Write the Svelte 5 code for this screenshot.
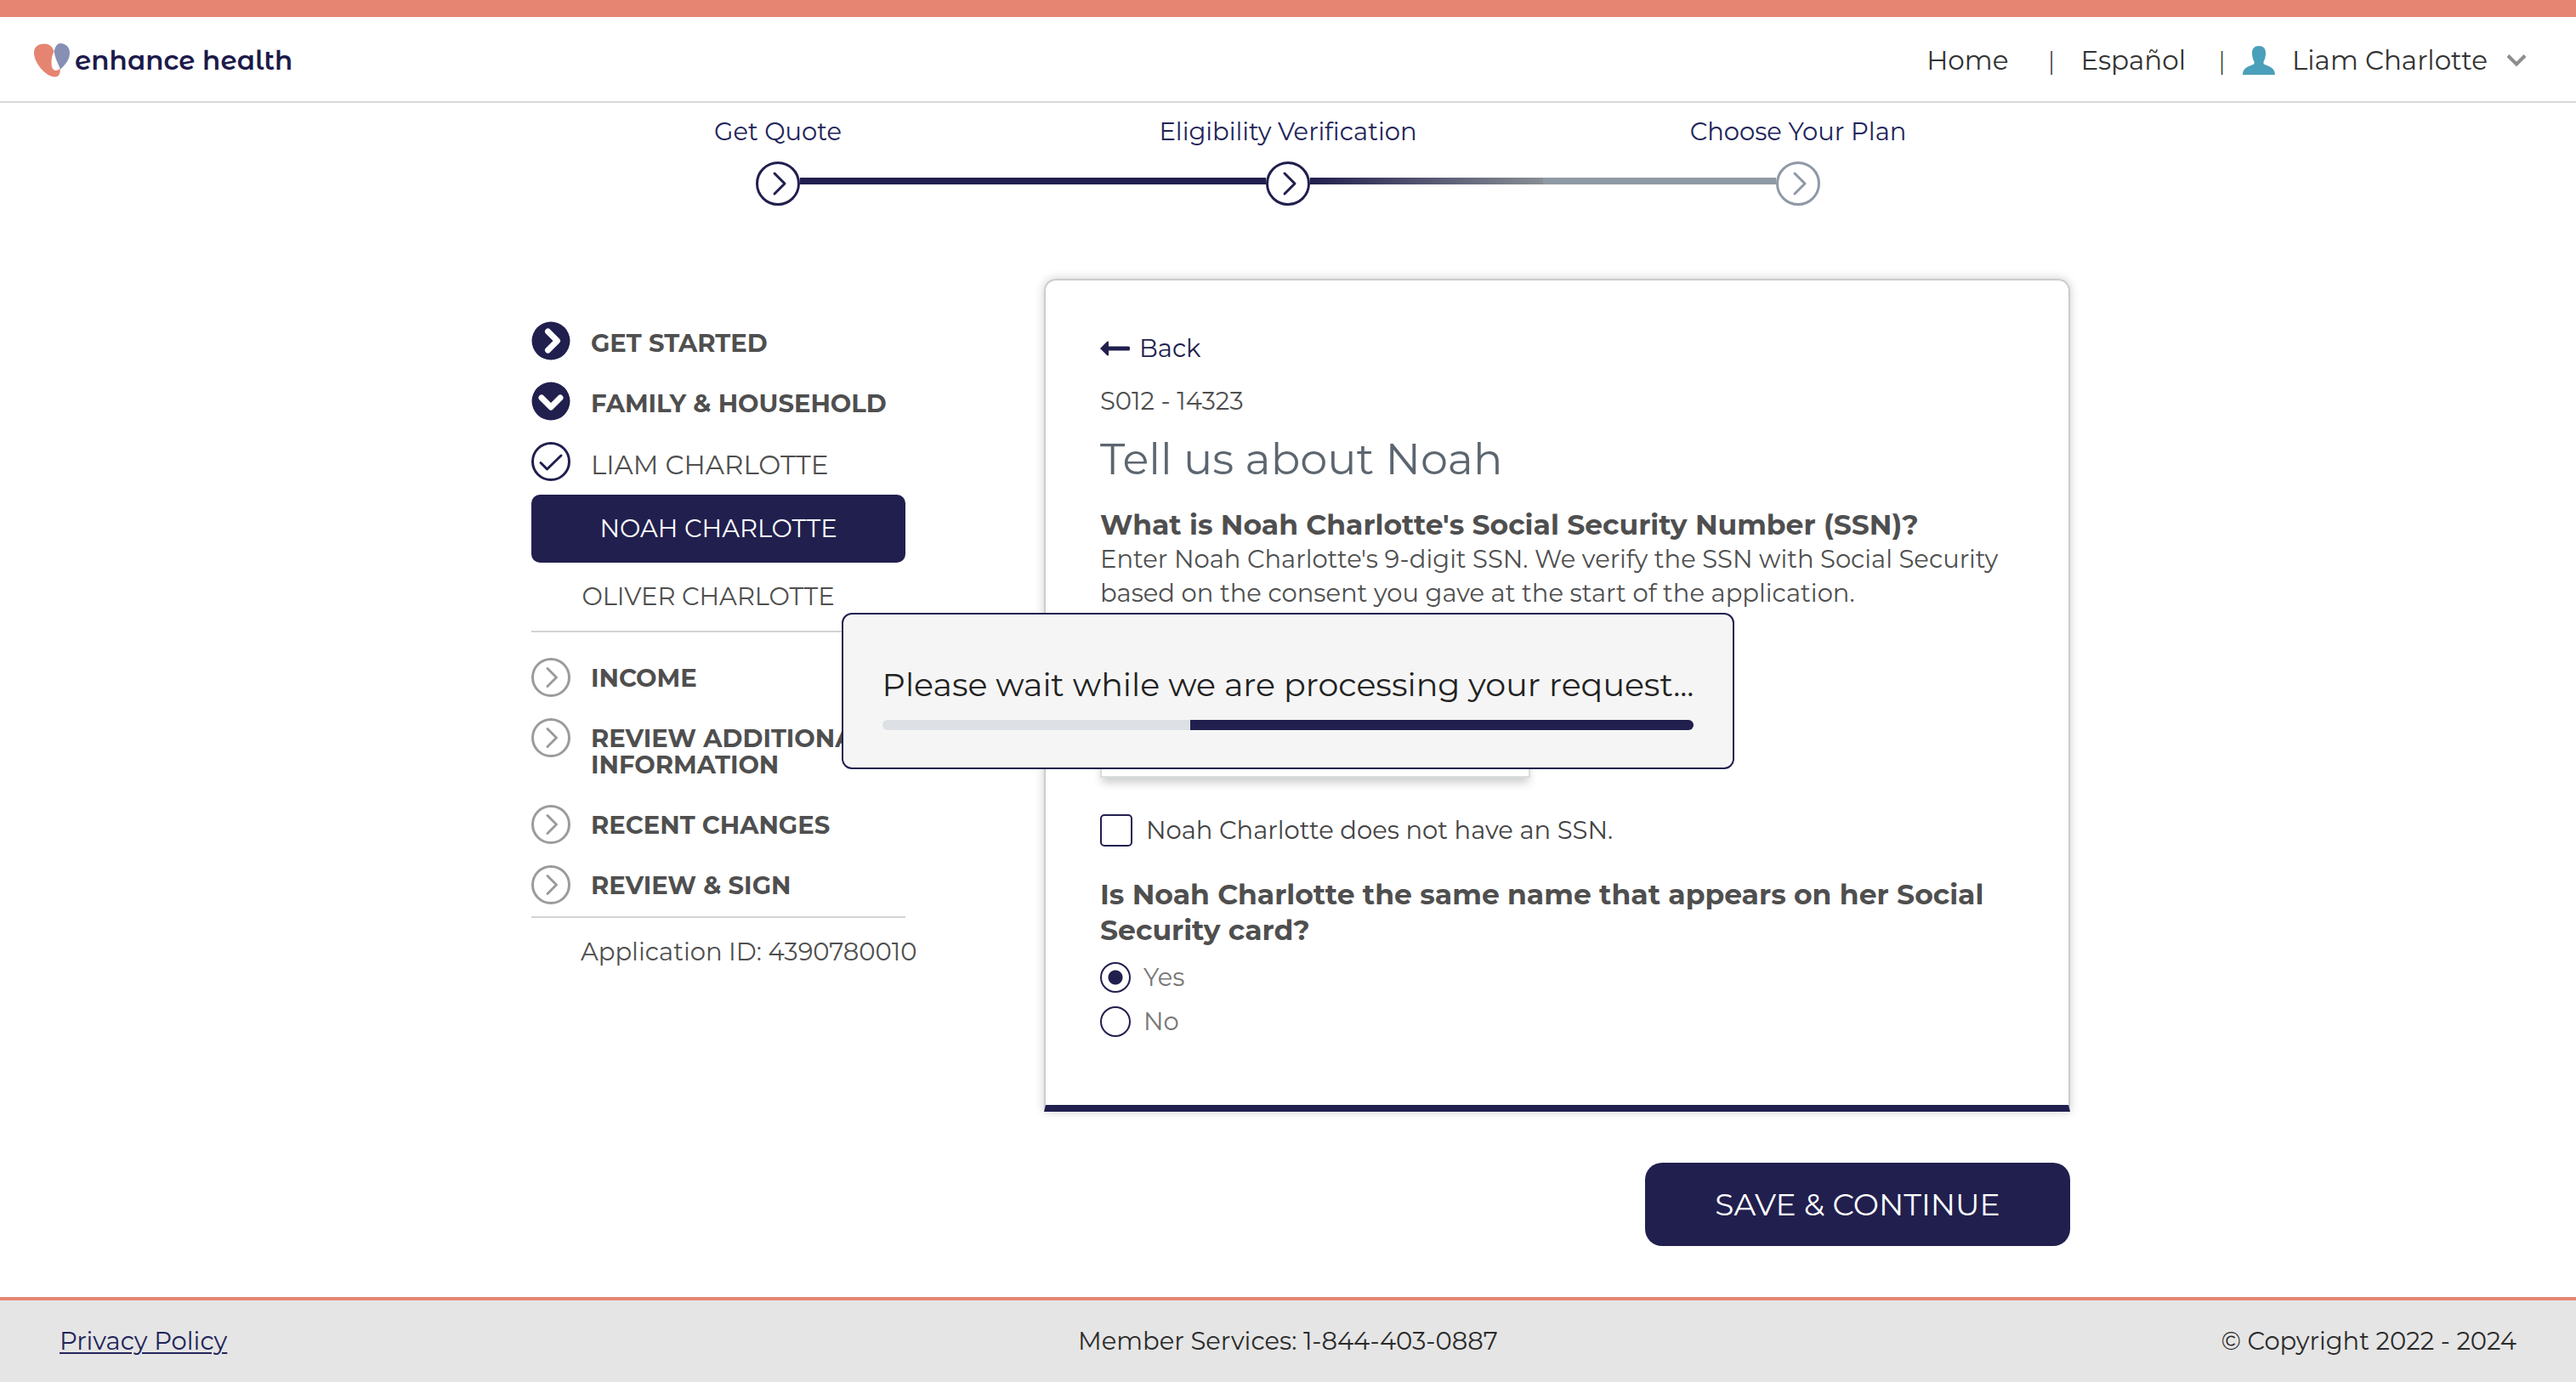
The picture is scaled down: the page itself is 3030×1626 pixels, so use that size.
<script>
  const steps = [
    { label: 'Get Quote', before: 'none', after: 'done', state: 'done' },
    { label: 'Eligibility Verification', before: 'done', after: 'fading', state: 'done' },
    { label: 'Choose Your Plan', before: 'todo', after: 'none', state: 'todo' }
  ];
  const upcoming = ['INCOME', 'REVIEW ADDITIONAL INFORMATION', 'RECENT CHANGES', 'REVIEW & SIGN'];
  const progressStart = 38;
  let noSsn = $state(false);
  let sameName = $state('yes');
</script>

<div class="page">
  <header class="topbar">
    <a class="brand" href="#home">
      <svg class="heart" viewBox="0 0 42 40" aria-hidden="true">
        <path fill="#e58571" d="M0 11C0 4 5 .5 12 .5c6 0 9.500 3 11.500 9C21 14 20.500 19 20.500 23c0 5 2 9 5 9 2.500 0 4-1.500 5-2.500 1 5-1 10-6 10C15 39.500 0 24 0 11Z" />
        <path fill="#878fb5" d="M31 0c7 0 11 5 11 11 0 8-5 14-11 19.500C28.500 24 24.500 17 23.700 9.500 25 4 27 0 31 0Z" />
      </svg>
      <span>enhance health</span>
    </a>
    <nav class="links" aria-label="Account">
      <a href="#home">Home</a>
      <span class="bar first">|</span>
      <a href="#es">Español</a>
      <span class="bar second">|</span>
      <button class="user" type="button">
        <svg class="person" viewBox="0 0 38 34" aria-hidden="true">
          <path fill="#4a9fba" d="M19 0c5 0 8 3 8 8 0 5-1 8-2.500 10.500V21c2 2.500 13.500 2.500 13.500 13H0C0 23.500 11.500 23.500 13.500 21v-2.500C12 16 11 13 11 8c0-5 3-8 8-8Z" />
        </svg>
        Liam Charlotte
        <svg class="caret" viewBox="0 0 24 14" aria-hidden="true">
          <path fill="none" stroke="#8d8d8d" stroke-width="4" d="M2 1.500 12 11.500 22 1.500" />
        </svg>
      </button>
    </nav>
  </header>

  <ol class="steps">
    {#each steps as step}
      <li>
        <span class="step-label">{step.label}</span>
        <span class="rail">
          <span class="segment {step.before}"></span>
          <svg class="step-icon {step.state}" viewBox="0 0 52 52" aria-hidden="true">
            <circle cx="26" cy="26" r="24.500" />
            <path d="m22 14 12 12-12 12" />
          </svg>
          <span class="segment {step.after}"></span>
        </span>
      </li>
    {/each}
  </ol>

  <main class="content">
    <aside class="sidebar">
      <ul>
        <li class="entry opened">
          <svg class="dot" viewBox="0 0 46 46" aria-hidden="true">
            <circle cx="23" cy="23" r="22.500" fill="#211f4e" />
            <path class="thick" d="m19.500 12 11 11-11 11" />
          </svg>
          <span>GET STARTED</span>
        </li>
        <li class="entry opened">
          <svg class="dot" viewBox="0 0 46 46" aria-hidden="true">
            <circle cx="23" cy="23" r="22.500" fill="#211f4e" />
            <path class="thick" d="m12 19 11 11 11-11" />
          </svg>
          <span>FAMILY &amp; HOUSEHOLD</span>
        </li>
        <li class="entry person-entry">
          <svg class="dot checked" viewBox="0 0 46 46" aria-hidden="true">
            <circle cx="23" cy="23" r="21.500" />
            <path d="m11 24.500 7.500 7.500L35 16" />
          </svg>
          <span>LIAM CHARLOTTE</span>
        </li>
      </ul>
      <a class="member active" href="#noah">NOAH CHARLOTTE</a>
      <a class="member other" href="#oliver">OLIVER CHARLOTTE</a>
      <ul class="upcoming">
        {#each upcoming as item}
          <li class="entry">
            <svg class="dot pending" viewBox="0 0 46 46" aria-hidden="true">
              <circle cx="23" cy="23" r="21.500" />
              <path d="m19 12.500 10.500 10.500L19 33.500" />
            </svg>
            <span>{item}</span>
          </li>
        {/each}
      </ul>
      <p class="app-id">Application ID: 4390780010</p>
    </aside>

    <form class="form" onsubmit={(e) => e.preventDefault()}>
      <section class="card">
        <a class="back" href="#back">
          <svg viewBox="0 0 36 18" aria-hidden="true">
            <path fill="#211f4e" d="M0 9 8 1c1-1 2-.5 2 .8V6.500h23.500q1.500 0 1.500 1.500v2q0 1.500-1.500 1.500H10v4.700c0 1.300-1 1.800-2 .8Z" />
          </svg>
          Back
        </a>
        <p class="code">S012 - 14323</p>
        <h1>Tell us about Noah</h1>
        <h2 id="ssn-title">What is Noah Charlotte's Social Security Number (SSN)?</h2>
        <p class="help">
          Enter Noah Charlotte's 9-digit SSN. We verify the SSN with Social Security based on the
          consent you gave at the start of the application.
        </p>
        <input class="ssn" type="text" aria-labelledby="ssn-title" />
        <label class="check">
          <input type="checkbox" bind:checked={noSsn} />
          Noah Charlotte does not have an SSN.
        </label>
        <fieldset>
          <legend>Is Noah Charlotte the same name that appears on her Social Security card?</legend>
          <label class="radio"><input type="radio" value="yes" bind:group={sameName} />Yes</label>
          <label class="radio"><input type="radio" value="no" bind:group={sameName} />No</label>
        </fieldset>
      </section>
      <button class="save" type="submit">SAVE &amp; CONTINUE</button>
    </form>
  </main>

  <footer>
    <a href="#privacy">Privacy Policy</a>
    <span class="services">Member Services: 1-844-403-0887</span>
    <span class="copyright">© Copyright 2022 - 2024</span>
  </footer>

  <div class="overlay">
    <div class="dialog" role="status">
      <p>Please wait while we are processing your request...</p>
      <div class="track"><div class="fill" style:width="{100 - progressStart}%"></div></div>
    </div>
  </div>
</div>

<style>
  :global(body) {
    margin: 0;
    background: #fff;
  }
  .page {
    --navy: #211f4e;
    display: flex;
    flex-direction: column;
    min-height: 100vh;
    box-sizing: border-box;
    font-family: Montserrat, Inter, sans-serif;
    font-size: 29px;
    line-height: 40px;
    font-weight: 400;
    color: #4f4f4f;
  }
  h1, h2, p, ul, ol, fieldset, legend {
    margin: 0;
    padding: 0;
    border: 0;
  }
  ul, ol {
    list-style: none;
  }
  a {
    color: inherit;
    text-decoration: none;
  }
  button {
    font: inherit;
    border: 0;
    padding: 0;
    cursor: pointer;
  }

  .topbar {
    display: flex;
    align-items: center;
    justify-content: space-between;
    height: 97px;
    padding: 2px 58px 0 40px;
    border-top: 20px solid #e68572;
    border-bottom: 2px solid #d9d9d9;
    color: #333;
    font-size: 31px;
  }
  .brand {
    display: flex;
    align-items: center;
    gap: 6px;
    color: #1c1a4a;
    font-family: 'Montserrat Alternates', Montserrat, Inter, sans-serif;
    font-size: 31px;
    font-weight: 600;
    font-feature-settings: 'ss01';
  }
  .heart {
    width: 42px;
    height: 40px;
  }
  .links {
    display: flex;
    align-items: center;
  }
  .bar {
    font-weight: 300;
  }
  .bar.first {
    margin: 0 30px 0 46px;
  }
  .bar.second {
    margin: 0 20px 0 38px;
  }
  .user {
    display: flex;
    align-items: center;
    background: none;
    color: inherit;
  }
  .person {
    width: 38px;
    height: 34px;
    margin-right: 20px;
  }
  .caret {
    width: 24px;
    height: 14px;
    margin-left: 22px;
  }

  .steps {
    display: grid;
    grid-template-columns: repeat(3, 1fr);
    width: 100%;
    max-width: 1800px;
    margin: 0 auto;
    padding-top: 14px;
    color: #22245a;
  }
  .steps li {
    display: flex;
    flex-direction: column;
    gap: 15px;
    text-align: center;
  }
  .rail {
    display: flex;
    align-items: center;
  }
  .segment {
    flex: 1;
    height: 8px;
    margin-bottom: 6px;
  }
  .segment.done {
    background: var(--navy);
  }
  .segment.fading {
    background: linear-gradient(90deg, #211f4e, #888e94);
  }
  .segment.todo {
    background: #8f99a5;
  }
  .step-icon {
    width: 52px;
    height: 52px;
    fill: none;
    stroke-width: 3;
    stroke-linecap: round;
    stroke-linejoin: round;
  }
  .step-icon.done {
    stroke: var(--navy);
  }
  .step-icon.todo {
    stroke: #8f99a5;
  }

  .content {
    flex: 1;
    display: grid;
    grid-template-columns: 440px minmax(0, 1207px);
    justify-content: center;
    gap: 163px;
    padding: 86px 0 58px 30px;
  }
  .sidebar {
    padding-top: 50px;
  }
  .sidebar ul {
    display: flex;
    flex-direction: column;
    gap: 25px;
  }
  .entry {
    display: flex;
    align-items: flex-start;
    gap: 24px;
    line-height: 31px;
    font-weight: 700;
  }
  .entry span {
    padding: 8px 0 7px;
  }
  .opened span {
    padding: 10px 0 5px;
  }
  .person-entry {
    font-size: 31px;
    font-weight: 400;
  }
  .person-entry span {
    padding: 12px 0 3px;
  }
  .dot {
    flex: none;
    width: 46px;
    height: 46px;
    fill: none;
    stroke-linecap: round;
    stroke-linejoin: round;
  }
  .thick {
    stroke: #fff;
    stroke-width: 7;
  }
  .checked {
    stroke: var(--navy);
    stroke-width: 3;
  }
  .pending {
    stroke: #9b9b9b;
    stroke-width: 3;
  }
  .member {
    display: flex;
    align-items: center;
    justify-content: center;
    height: 80px;
    box-sizing: border-box;
  }
  .active {
    margin-top: 16px;
    border-radius: 10px;
    background: var(--navy);
    color: #fff;
  }
  .other {
    padding-right: 24px;
  }
  .sidebar .upcoming {
    padding: 30px 0 14px;
    border-top: 2px solid #d3d3d3;
    border-bottom: 2px solid #d3d3d3;
  }
  .app-id {
    padding: 20px 0 0 58px;
    white-space: nowrap;
  }

  .form {
    display: flex;
    flex-direction: column;
  }
  .card {
    display: flex;
    flex-direction: column;
    align-items: flex-start;
    padding: 60px 50px 78px 64px;
    border: 2px solid #ccc;
    border-bottom: 8px solid var(--navy);
    border-radius: 14px 14px 0 0;
    box-shadow: 0 0 12px #0003;
  }
  .back {
    display: flex;
    align-items: center;
    gap: 10px;
    color: var(--navy);
  }
  .back svg {
    width: 36px;
    height: 18px;
  }
  .code {
    margin-top: 22px;
  }
  h1 {
    margin-top: 18px;
    font-size: 51px;
    line-height: 60px;
    font-weight: 400;
    color: #5c6670;
  }
  h2,
  legend {
    font-size: 33px;
    line-height: 42px;
    font-weight: 700;
  }
  h2 {
    margin-top: 26px;
  }
  .ssn {
    width: 506px;
    max-width: 100%;
    height: 80px;
    box-sizing: border-box;
    margin-top: 117px;
    padding: 0 20px;
    border: 2px solid #d9dddd;
    background: #fff;
    box-shadow: 0 8px 10px -2px #0003;
    font: inherit;
  }
  .check,
  .radio {
    display: flex;
    align-items: center;
  }
  .check {
    gap: 16px;
    margin-top: 42px;
    color: #444;
  }
  .check input,
  .radio input {
    appearance: none;
    box-sizing: border-box;
    margin: 0;
    border: 2px solid var(--navy);
    background: #fff;
  }
  .check input {
    width: 38px;
    height: 38px;
    border-radius: 5px;
  }
  .check input:checked {
    background: var(--navy);
  }
  fieldset {
    min-width: 0;
    margin-top: 34px;
  }
  legend {
    margin-bottom: 15px;
  }
  .radio {
    gap: 15px;
    margin-bottom: 12px;
    color: #777;
  }
  .radio:last-child {
    margin-bottom: 0;
  }
  .radio input {
    width: 36px;
    height: 36px;
    border-radius: 50%;
  }
  .radio input:checked {
    background: radial-gradient(circle, var(--navy) 8px, #fff 9px);
  }
  .save {
    align-self: flex-end;
    width: 500px;
    height: 98px;
    margin-top: 60px;
    border-radius: 20px;
    background: var(--navy);
    color: #fff;
    font-size: 36px;
  }

  footer {
    display: grid;
    grid-template-columns: 1fr auto 1fr;
    align-items: center;
    height: 96px;
    padding: 0 70px;
    border-top: 4px solid #e68572;
    background: #e5e5e5;
    color: #2b2b2b;
  }
  footer a {
    justify-self: start;
    color: #22245a;
    text-decoration: underline;
    text-decoration-thickness: 2px;
    text-underline-offset: 3px;
  }
  .copyright {
    justify-self: end;
  }

  .overlay {
    position: fixed;
    inset: 0;
    display: flex;
    align-items: center;
    justify-content: center;
  }
  .dialog {
    box-sizing: border-box;
    padding: 58px 46px 44px;
    border: 2px solid var(--navy);
    border-radius: 12px;
    background: #f5f5f5;
    color: #222;
    font-size: 38px;
    line-height: 50px;
  }
  .track {
    display: flex;
    justify-content: flex-end;
    height: 12px;
    margin-top: 16px;
    border-radius: 6px;
    background: #dde1e5;
    overflow: hidden;
  }
  .fill {
    background: var(--navy);
  }
</style>
